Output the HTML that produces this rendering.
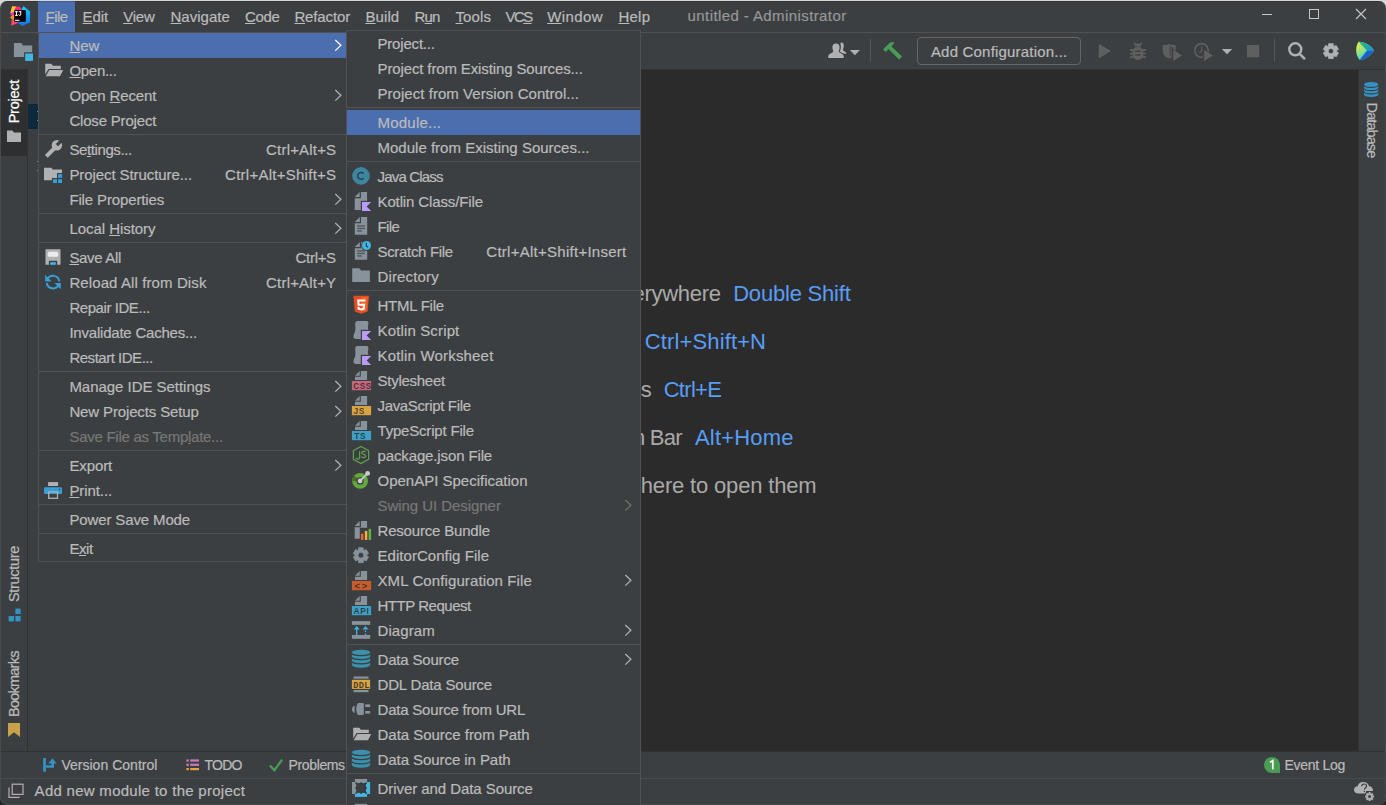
<!DOCTYPE html>
<html><head><meta charset="utf-8"><title>untitled - Administrator</title>
<style>
*{box-sizing:border-box}
html,body{margin:0;padding:0}
body{width:1386px;height:805px;overflow:hidden;position:relative;font-family:"Liberation Sans",sans-serif;background:linear-gradient(#d6d6d6 0,#d6d6d6 14px,#232323 14px)}
#frame{position:absolute;left:0;top:1px;width:1386px;height:804px;border:1px solid #4a4a4a;border-top-width:0;border-radius:7px;overflow:hidden;background:#3c3f41}
#win{position:absolute;left:-1px;top:-1px;width:1386px;height:805px}
#pop{position:absolute;left:0;top:0;width:1386px;height:805px;overflow:hidden}
.abs{position:absolute}
.t{position:absolute;white-space:pre;display:block;-webkit-text-stroke:0.2px}
.t u{text-decoration:underline;text-decoration-skip-ink:none;text-underline-offset:1px;text-decoration-thickness:1px}
svg.ov{position:absolute;left:0;top:0;width:1386px;height:805px;pointer-events:none}
.menu{position:absolute;background:#3c3f41;border:1px solid #515151}
.sel{position:absolute;height:25px;background:#4b6eaf}
.sep{position:absolute;left:0;right:0;height:1px;background:#515151}
</style></head><body>
<div id='frame'><div id='win'>

<!-- menubar -->
<div class='abs' style='left:38px;top:1px;width:37px;height:31px;background:#4b6eaf'></div>
<div class='abs' style='left:1px;top:32px;width:1384px;height:1px;background:#515151'></div>
<div class='abs' style='left:1px;top:1px;width:1384px;height:1px;background:rgba(0,0,0,0.16)'></div>
<!-- toolbar bottom border / editor -->
<div class='abs' style='left:28px;top:69px;width:1331px;height:682px;background:#2b2b2b'></div>
<div class='abs' style='left:1px;top:69px;width:1384px;height:1px;background:#323232'></div>
<!-- left strip -->
<div class='abs' style='left:1px;top:70px;width:26px;height:86px;background:#2d2f30'></div>
<div class='abs' style='left:27px;top:69px;width:1px;height:682px;background:#323232'></div>
<div class='abs' style='left:28px;top:69px;width:330px;height:682px;background:#3c3f41'></div>
<div class='abs' style='left:28px;top:104px;width:12px;height:25px;background:#0d293e'></div>
<!-- right strip -->
<div class='abs' style='left:1358px;top:69px;width:1px;height:682px;background:#323232'></div>
<!-- bottom strips -->
<div class='abs' style='left:1px;top:751px;width:1384px;height:1px;background:#323232'></div>
<div class='abs' style='left:1px;top:778px;width:1384px;height:1px;background:#4a4a4a'></div>
<!-- add configuration button -->
<div class='abs' style='left:917px;top:37px;width:164px;height:28px;border:1px solid #646668;border-radius:4px'></div>
<!-- toolbar separators -->
<div class='abs' style='left:870px;top:39px;width:1px;height:23px;background:#535557'></div>
<div class='abs' style='left:1274px;top:39px;width:1px;height:23px;background:#535557'></div>

<svg class='ov' viewBox='0 0 1386 805'><defs><linearGradient id="ijr" x1="0" y1="0" x2="0" y2="1"><stop offset="0" stop-color="#00d8ff"/><stop offset="1" stop-color="#1a6fe8"/></linearGradient><linearGradient id="ijl" x1="0" y1="0" x2="0" y2="1"><stop offset="0" stop-color="#ffd23c"/><stop offset="0.45" stop-color="#ff3ea8"/><stop offset="1" stop-color="#ff7a18"/></linearGradient><linearGradient id="lg1" x1="0" y1="0" x2="0.6" y2="1"><stop offset="0" stop-color="#f2f03a"/><stop offset="0.55" stop-color="#8fe08a"/><stop offset="1" stop-color="#1cc6e8"/></linearGradient><linearGradient id="lg2" x1="0" y1="0" x2="1" y2="1"><stop offset="0" stop-color="#19c46e"/><stop offset="1" stop-color="#1d8fe0"/></linearGradient></defs>
<defs><linearGradient id="ijll" x1="0" y1="0" x2="1" y2="1"><stop offset="0" stop-color="#ff6a2c"/><stop offset="1" stop-color="#ff2aa8"/></linearGradient></defs>
<path d="M12.1 6.2 L16.4 6.4 L15.2 10.6 L14.2 12.2 L10.2 13.5 Z" fill="#ffc83a"/>
<path d="M16.1 6.6 L19.9 6.8 L21.9 9.6 L21.9 10.4 L14.2 10.4 L15 8.4 Z" fill="#ff2d78"/>
<path d="M10.2 13.5 L14.4 11.4 L14.4 15.2 L11 15.6 Z" fill="#f02bd0"/>
<path d="M10.2 17.3 L12.4 15.3 L14.4 15 L14.4 19.2 L12 19.6 Z" fill="#ff9a10"/>
<path d="M12 19.2 L14.4 18.6 L14.4 21.5 L18.4 21.5 L18 23 L11.2 25.7 Z" fill="url(#ijll)"/>
<path d="M23.4 6 L30 11.4 L30 22.5 L22 26 L18.2 22.9 L18.4 21.5 L25.6 21.5 L25.6 10.4 L21.9 10.4 L21.8 9.5 Z" fill="url(#ijr)"/>
<rect x="14.2" y="10.2" width="11.6" height="11.5" fill="#0b0305"/>
<g fill="#ffffff"><rect x="15.1" y="11.2" width="2.7" height="1"/><rect x="15.95" y="11.2" width="1" height="4.6"/><rect x="15.1" y="14.9" width="2.7" height="1"/><rect x="18.7" y="11.2" width="2.5" height="1"/><rect x="20.2" y="11.2" width="1" height="3.6"/></g>
<path d="M18.7 14.3 V14.6 C18.7 15.1 19.2 15.4 19.8 15.4 C20.4 15.4 20.7 15.100 20.7 14.6" fill="none" stroke="#fff" stroke-width="1"/>
<rect x="15" y="19.8" width="4.4" height="1.1" fill="#f4eeee"/>
<path d="M13.9 43 H21.3 L23 45.5 H32.2 V52.3 H24.1 V57 H13.9 Z" fill="#87929a"/>
<rect x="25.2" y="53.5" width="7.8" height="7.4" fill="#40b6e0"/>
<path d="M7 130.4 H12.4 L14 132.6 H21 V142 H7 Z" fill="#afb1b3"/>
<g fill="#3592c4"><rect x="15.4" y="608.6" width="5.2" height="5.4"/><rect x="8.6" y="616" width="5.4" height="5.4"/><rect x="15.4" y="616" width="5.2" height="5.4"/></g>
<path d="M8 723 H20 V737 L14 732.2 L8 737 Z" fill="#c9a14a"/>
<g fill="#afb1b3"><path d="M841.2 42.6 C843.4 42.6 844 44.6 843.8 46.6 C843.6 48.4 842.8 49.4 843 50 C843.4 51 845.4 51.4 846.2 52.8 L846.2 54 L842.6 53.2 L839.6 51.4 C840.6 50 841 48 840.8 46 C840.6 44.4 840 43.2 841.2 42.6 Z"/><path d="M836 43.6 C838.6 43.6 839.8 45.6 839.6 48 C839.4 50 838.6 51 838.8 51.8 C839.2 53 843.4 53.6 843.8 56.4 L843.8 58 H828.2 L828.2 56.4 C828.6 53.6 832.8 53 833.2 51.8 C833.4 51 832.6 50 832.4 48 C832.2 45.6 833.4 43.6 836 43.6 Z"/></g>
<path d="M849.9 50 H859.9 L854.9 55.2 Z" fill="#afb1b3"/>
<path d="M883 49.4 L890 42.4 L894 42 L893.6 44 L891.4 46.2 L902 56.6 L899 59.6 L888.6 49 L885.8 52 Z" fill="#499c54"/>
<path d="M1098.8 43.8 L1111 51.1 L1098.8 58.4 Z" fill="#5e6060"/>
<g fill="#5e6060"><path d="M1137.9 46.8 C1141.6 46.8 1143.4 49.6 1143.4 53.4 C1143.4 57.2 1141.2 59.8 1137.9 59.8 C1134.6 59.8 1132.4 57.2 1132.4 53.4 C1132.400 49.6 1134.2 46.8 1137.9 46.8 Z"/><path d="M1134.6 46.6 C1134.6 44.6 1136 43.6 1137.9 43.6 C1139.8 43.6 1141.2 44.600 1141.2 46.6 Z"/></g>
<g stroke="#5e6060" stroke-width="1.8" fill="none"><path d="M1135.8 44.6 L1134 42.8 M1140 44.6 L1141.8 42.800"/><path d="M1130 50 H1133 M1130 53.600 H1133 M1130 57.2 H1133 M1142.8 50 H1145.8 M1142.8 53.600 H1145.800 M1142.8 57.2 H1145.800"/></g>
<rect x="1135.2" y="50.6" width="5.4" height="1.4" fill="#3c3f41"/><rect x="1135.2" y="54.2" width="5.4" height="1.400" fill="#3c3f41"/>
<path d="M1162.800 45 C1166 45 1168 44.6 1169.2 44 C1170.600 44.6 1172.400 45 1175.600 45 V51 C1175.600 55 1172.800 57.4 1169.2 58.600 C1165.600 57.400 1162.800 55 1162.800 51 Z" fill="#5e6060"/>
<path d="M1169.4 46.2 V57 C1171.4 56 1173.200 54.4 1173.800 52 V46.8 C1172 46.800 1170.600 46.6 1169.400 46.2 Z" fill="#3c3f41" opacity="0.55"/>
<path d="M1172 48.4 L1183.400 55.300 L1172 62.2 Z" fill="#3c3f41"/>
<path d="M1173.200 49.800 L1182 55.400 L1173.200 61 Z" fill="#5e6060"/>
<circle cx="1201.500" cy="50.400" r="6.800" fill="none" stroke="#5e6060" stroke-width="1.600"/>
<path d="M1201.700 46.400 V50.600 L1199.600 52.600" fill="none" stroke="#5e6060" stroke-width="1.300"/>
<path d="M1203 48.400 L1214.400 55.300 L1203 62.200 Z" fill="#3c3f41"/>
<path d="M1204.200 49.800 L1213 55.400 L1204.200 61 Z" fill="#5e6060"/>
<path d="M1221.800 49 H1232.200 L1227 54.200 Z" fill="#afb1b3"/>
<rect x="1247" y="45" width="12.200" height="12.200" fill="#5e6060"/>
<circle cx="1295.300" cy="49.300" r="6" fill="none" stroke="#afb1b3" stroke-width="2.400"/>
<path d="M1299.600 53.800 L1305 59.200" stroke="#afb1b3" stroke-width="2.600"/>
<path d="M1328.39 46.09 L1328.59 43.65 L1333.21 43.65 L1333.41 46.09 L1333.98 46.42 L1336.20 45.38 L1338.51 49.37 L1336.49 50.77 L1336.49 51.43 L1338.51 52.83 L1336.20 56.82 L1333.98 55.78 L1333.41 56.11 L1333.21 58.55 L1328.59 58.55 L1328.39 56.11 L1327.82 55.78 L1325.60 56.82 L1323.29 52.83 L1325.31 51.43 L1325.31 50.77 L1323.29 49.37 L1325.60 45.38 L1327.82 46.42 Z M1333.6000000000001 51.1 A2.7 2.7 0 1 0 1328.2 51.1 A2.7 2.7 0 1 0 1333.6000000000001 51.1 Z" fill="#afb1b3" fill-rule="evenodd" stroke="#afb1b3" stroke-width="0.800" stroke-linejoin="round"/>
<path d="M1358.600 41.800 C1364 41.600 1371 45.600 1374 50.400 C1371.500 55.400 1364.500 59.800 1359.600 60 C1355.400 55.400 1355 46.400 1358.600 41.800 Z" fill="url(#lg1)"/>
<path d="M1358.600 41.800 C1364 41.600 1371 45.600 1374 50.400 L1367 50.400 Z" fill="url(#lg2)"/>
<path d="M1374 50.400 C1371.500 55.400 1364.500 59.800 1359.600 60 L1367 50.400 Z" fill="#1a62c8"/>
<g stroke="#c8c8c8" stroke-width="1" fill="none" shape-rendering="crispEdges"><path d="M1262 14.500 H1272"/><rect x="1309.500" y="9.500" width="9" height="9"/></g>
<g stroke="#c8c8c8" stroke-width="1.100" fill="none"><path d="M1356 9 L1366 19 M1366 9 L1356 19"/></g>
<path d="M1364 84.5 A7.15 2.4 0 0 1 1378.3 84.5 V94.6 A7.15 2.4 0 0 1 1364 94.6 Z" fill="#3592c4"/>
<path d="M1364 85.0 A7.15 2.4 0 0 0 1378.3 85.0" fill="none" stroke="#3c3f41" stroke-width="1.100"/>
<path d="M1364 88.23333333333333 A7.15 2.4 0 0 0 1378.3 88.23333333333333" fill="none" stroke="#3c3f41" stroke-width="1.100"/>
<path d="M1364 91.46666666666667 A7.15 2.4 0 0 0 1378.3 91.46666666666667" fill="none" stroke="#3c3f41" stroke-width="1.100"/>
<g fill="#3592c4"><rect x="43.100" y="758" width="2.800" height="13.700"/><path d="M45.900 765.300 H51.400 V763 H54 V767.800 H45.900 Z"/><path d="M48.200 763.600 L52.500 758.200 L56.600 763.600 Z"/></g>
<g><rect x="186.400" y="759.400" width="2.400" height="2.200" fill="#c77dbb"/><rect x="190.200" y="759.400" width="8.800" height="2.200" fill="#c77dbb"/><rect x="186.400" y="763.700" width="2.400" height="2.200" fill="#c77dbb"/><rect x="190.200" y="763.700" width="8.800" height="2.200" fill="#c77dbb"/><rect x="186.400" y="768" width="2.400" height="2.200" fill="#e8a33e"/><rect x="190.200" y="768" width="8.800" height="2.200" fill="#e8a33e"/></g>
<path d="M269.800 765.400 L274.400 770.200 L282.200 759.600" fill="none" stroke="#499c54" stroke-width="2.200"/>
<path d="M1272 757 A8 8 0 0 1 1280 765 V773 H1272 A8 8 0 0 1 1272 757 Z" fill="#499c54"/>
<path d="M1270 762.400 L1272.800 760.600 V769.400" fill="none" stroke="#fff" stroke-width="1.700"/>
<g fill="none" stroke="#afb1b3" stroke-width="1.200"><rect x="12.200" y="784.200" width="10.800" height="10.200"/><path d="M9 787.400 V797.400 H19.600"/></g>
<path d="M1358.400 793.600 C1355.600 793.600 1354 791.800 1354 789.800 C1354 787.800 1355.600 786.200 1357.600 786.200 C1358.200 783.600 1360.600 782 1363.200 782 C1366 782 1368.200 783.600 1369 786 C1371.400 786.400 1373 788.200 1373 790.200 V791 H1366 V793.600 Z" fill="#afb1b3"/>
<path d="M1361.600 786.200 C1361.800 784.600 1363 784 1364.200 784 C1365.600 784 1366.600 784.800 1366.600 786 C1366.600 787.600 1364.400 787.800 1364.400 789.600 M1364.400 790.800 V792" fill="none" stroke="#3c3f41" stroke-width="1.200"/>
<circle cx="1369.6" cy="796.6" r="5.6" fill="#3c3f41"/>
<path d="M1368.56 793.57 L1368.60 792.11 L1370.60 792.11 L1370.64 793.57 L1371.01 793.73 L1372.06 792.72 L1373.48 794.14 L1372.47 795.19 L1372.63 795.56 L1374.09 795.60 L1374.09 797.60 L1372.63 797.64 L1372.47 798.01 L1373.48 799.06 L1372.06 800.48 L1371.01 799.47 L1370.64 799.63 L1370.60 801.09 L1368.60 801.09 L1368.56 799.63 L1368.19 799.47 L1367.14 800.48 L1365.72 799.06 L1366.73 798.01 L1366.57 797.64 L1365.11 797.60 L1365.11 795.60 L1366.57 795.56 L1366.73 795.19 L1365.72 794.14 L1367.14 792.72 L1368.19 793.73 Z M1371.1 796.6 A1.5 1.5 0 1 0 1368.1 796.6 A1.5 1.5 0 1 0 1371.1 796.6 Z" fill="#afb1b3" fill-rule="evenodd"/>
<g fill="#7f8b93"><rect x="37" y="111" width="1" height="1"/><rect x="37" y="120" width="1" height="1"/><rect x="37" y="161" width="1" height="1"/><rect x="37" y="170" width="1" height="1"/></g></svg>
<span class='t' style='left:45.5px;top:6.80px;font-size:15px;line-height:20px;letter-spacing:-0.491px;color:#bbbbbb;'><u>F</u>ile</span><span class='t' style='left:82.6px;top:6.80px;font-size:15px;line-height:20px;letter-spacing:-0.120px;color:#bbbbbb;'><u>E</u>dit</span><span class='t' style='left:123.2px;top:6.80px;font-size:15px;line-height:20px;letter-spacing:-0.217px;color:#bbbbbb;'><u>V</u>iew</span><span class='t' style='left:170.5px;top:6.80px;font-size:15px;line-height:20px;letter-spacing:0.014px;color:#bbbbbb;'><u>N</u>avigate</span><span class='t' style='left:245.0px;top:6.80px;font-size:15px;line-height:20px;letter-spacing:-0.353px;color:#bbbbbb;'><u>C</u>ode</span><span class='t' style='left:294.4px;top:6.80px;font-size:15px;line-height:20px;letter-spacing:-0.129px;color:#bbbbbb;'><u>R</u>efactor</span><span class='t' style='left:365.4px;top:6.80px;font-size:15px;line-height:20px;letter-spacing:0.110px;color:#bbbbbb;'><u>B</u>uild</span><span class='t' style='left:414.6px;top:6.80px;font-size:15px;line-height:20px;letter-spacing:-0.866px;color:#bbbbbb;'>R<u>u</u>n</span><span class='t' style='left:455.5px;top:6.80px;font-size:15px;line-height:20px;letter-spacing:0.092px;color:#bbbbbb;'><u>T</u>ools</span><span class='t' style='left:505.6px;top:6.80px;font-size:15px;line-height:20px;letter-spacing:-1.622px;color:#bbbbbb;'>VC<u>S</u></span><span class='t' style='left:547.2px;top:6.80px;font-size:15px;line-height:20px;letter-spacing:0.428px;color:#bbbbbb;'><u>W</u>indow</span><span class='t' style='left:618.4px;top:6.80px;font-size:15px;line-height:20px;letter-spacing:0.247px;color:#bbbbbb;'><u>H</u>elp</span><span class='t' style='left:687.6px;top:5.80px;font-size:15px;line-height:20px;letter-spacing:0.407px;color:#979797;'>untitled - Administrator</span><span class='t' style='left:930.9px;top:41.80px;font-size:15px;line-height:20px;letter-spacing:0.195px;color:#bbbbbb;'>Add Configuration...</span><span class='t' style='left:61.4px;top:755.15px;font-size:14px;line-height:20px;letter-spacing:0.020px;color:#bbbbbb;'>Version Control</span><span class='t' style='left:204.5px;top:755.15px;font-size:14px;line-height:20px;letter-spacing:-0.734px;color:#bbbbbb;'>TODO</span><span class='t' style='left:288.6px;top:755.15px;font-size:14px;line-height:20px;letter-spacing:-0.377px;color:#bbbbbb;'>Problems</span><span class='t' style='left:1284.5px;top:755.15px;font-size:14px;line-height:20px;letter-spacing:-0.295px;color:#bbbbbb;'>Event Log</span><span class='t' style='left:34.6px;top:780.80px;font-size:15px;line-height:20px;letter-spacing:0.278px;color:#bbbbbb;'>Add new module to the project</span><span class='t' style='left:533.4px;top:279.38px;font-size:22px;line-height:30px;letter-spacing:-0.274px;color:#a9a9a9;-webkit-text-stroke:0;'>Search Everywhere</span><span class='t' style='left:733.2px;top:279.38px;font-size:22px;line-height:30px;letter-spacing:-0.205px;color:#589df6;-webkit-text-stroke:0;'>Double Shift</span><span class='t' style='left:539.5px;top:327.38px;font-size:22px;line-height:30px;letter-spacing:-0.319px;color:#a9a9a9;-webkit-text-stroke:0;'>Go to File</span><span class='t' style='left:644.8px;top:327.38px;font-size:22px;line-height:30px;letter-spacing:0.125px;color:#589df6;-webkit-text-stroke:0;'>Ctrl+Shift+N</span><span class='t' style='left:534.8px;top:375.38px;font-size:22px;line-height:30px;letter-spacing:-0.480px;color:#a9a9a9;-webkit-text-stroke:0;'>Recent Files</span><span class='t' style='left:663.7px;top:375.38px;font-size:22px;line-height:30px;letter-spacing:-0.710px;color:#589df6;-webkit-text-stroke:0;'>Ctrl+E</span><span class='t' style='left:548.5px;top:423.38px;font-size:22px;line-height:30px;letter-spacing:-0.793px;color:#a9a9a9;-webkit-text-stroke:0;'>Navigation Bar</span><span class='t' style='left:695.0px;top:423.38px;font-size:22px;line-height:30px;letter-spacing:0.183px;color:#589df6;-webkit-text-stroke:0;'>Alt+Home</span><span class='t' style='left:543.7px;top:471.38px;font-size:22px;line-height:30px;letter-spacing:-0.174px;color:#a9a9a9;-webkit-text-stroke:0;'>Drop files here to open them</span>
<span class='t' style='left:0;top:0;font-size:14.5px;line-height:14px;color:#ffffff;transform-origin:0 0;transform:translate(6.98px,123.30px) rotate(-90deg);letter-spacing:-0.273px'>Project</span><span class='t' style='left:0;top:0;font-size:14.5px;line-height:14px;color:#bbbbbb;transform-origin:0 0;transform:translate(6.98px,602.00px) rotate(-90deg);letter-spacing:-0.318px'>Structure</span><span class='t' style='left:0;top:0;font-size:14.5px;line-height:14px;color:#bbbbbb;transform-origin:0 0;transform:translate(6.98px,717.00px) rotate(-90deg);letter-spacing:-0.766px'>Bookmarks</span><span class='t' style='left:0;top:0;font-size:14.5px;line-height:14px;color:#bbbbbb;transform-origin:0 0;transform:translate(1378.62px,102.60px) rotate(90deg);letter-spacing:-0.925px'>Database</span>
</div></div>
<div id='pop'>
<!-- File menu -->
<div class='menu' style='left:38px;top:32px;width:309px;height:530px'><div class='sel' style='left:0;top:0px;width:307px'></div><div class='sep' style='top:101px'></div><div class='sep' style='top:180px'></div><div class='sep' style='top:209px'></div><div class='sep' style='top:338px'></div><div class='sep' style='top:417px'></div><div class='sep' style='top:471px'></div><div class='sep' style='top:500px'></div></div>
<svg class='ov' viewBox='0 0 1386 805'><path d='M335.3 40.0 L340.90000000000003 45.3 L335.3 50.599999999999994' fill='none' stroke='#ffffff' stroke-width='1.3'/><path d='M335.3 90.0 L340.90000000000003 95.3 L335.3 100.6' fill='none' stroke='#afb1b3' stroke-width='1.3'/><path d='M335.3 194.0 L340.90000000000003 199.3 L335.3 204.60000000000002' fill='none' stroke='#afb1b3' stroke-width='1.3'/><path d='M335.3 223.0 L340.90000000000003 228.3 L335.3 233.60000000000002' fill='none' stroke='#afb1b3' stroke-width='1.3'/><path d='M335.3 381.0 L340.90000000000003 386.3 L335.3 391.6' fill='none' stroke='#afb1b3' stroke-width='1.3'/><path d='M335.3 406.0 L340.90000000000003 411.3 L335.3 416.6' fill='none' stroke='#afb1b3' stroke-width='1.3'/><path d='M335.3 460.0 L340.90000000000003 465.3 L335.3 470.6' fill='none' stroke='#afb1b3' stroke-width='1.3'/><!-- Open folder -->
<g fill="#afb1b3">
<path d="M45.2 63.8 H51.3 L52.8 65.8 H60.8 V68.9 H48.6 L45.2 74.6 Z"/>
<path d="M49.3 70 H63.2 L60 76.3 H45.7 Z"/>
</g>
<!-- wrench -->
<path d="M46.3 156.4 L54.8 147.8" stroke="#afb1b3" stroke-width="4" fill="none"/>
<circle cx="56.9" cy="145.2" r="5.2" fill="#afb1b3"/>
<rect x="-1.6" y="-8" width="3.2" height="8.3" transform="translate(57.1 145) rotate(45)" fill="#3c3f41"/>
<!-- project structure -->
<path fill="#afb1b3" d="M44 167.7 H51.4 L52.8 169.6 H62 V172.9 H57 V178 H51.9 V180.3 H44 Z"/>
<g fill="#389fd6"><rect x="58.1" y="174.1" width="4" height="3.8"/><rect x="53" y="179.2" width="4" height="3.8"/><rect x="58.1" y="179.2" width="4" height="3.8"/></g>
<!-- save all -->
<path fill="#afb1b3" d="M45.5 249.3 H60.5 V264.8 H57.2 V260.8 H48.9 V264.8 H45.5 Z"/>
<rect x="47.8" y="251.8" width="10.4" height="5" rx="1.6" fill="#ececec"/>
<rect x="50.2" y="262.2" width="5.6" height="2.6" fill="#40b6e0"/>
<!-- reload -->
<g fill="none" stroke="#389fd6" stroke-width="2">
<path d="M47.2 279.8 A6.3 6.3 0 0 1 59.3 281.3"/>
<path d="M58.9 284.4 A6.3 6.3 0 0 1 46.8 283"/>
</g>
<path fill="#389fd6" d="M45.2 275 V281.4 H51.6 Z"/>
<path fill="#389fd6" d="M60.9 289.3 V282.9 H54.5 Z"/>
<!-- print -->
<rect x="48.1" y="482.1" width="10" height="3.9" fill="#afb1b3"/>
<rect x="44" y="487.2" width="18" height="6.7" rx="1.2" fill="#389fd6"/>
<rect x="58.8" y="488.9" width="1.4" height="1.2" fill="#3c3f41"/>
<rect x="48.7" y="494" width="8.8" height="4.3" fill="#3c3f41"/>
<rect x="48.7" y="491.9" width="8.8" height="6.4" fill="none" stroke="#afb1b3" stroke-width="1.3"/>
</svg>
<span class='t' style='left:69.4px;top:35.80px;font-size:15px;line-height:20px;letter-spacing:-0.008px;color:#bbbbbb;'><u>N</u>ew</span><span class='t' style='left:69.4px;top:60.80px;font-size:15px;line-height:20px;letter-spacing:-0.284px;color:#bbbbbb;'><u>O</u>pen...</span><span class='t' style='left:69.4px;top:85.80px;font-size:15px;line-height:20px;letter-spacing:-0.139px;color:#bbbbbb;'>Open <u>R</u>ecent</span><span class='t' style='left:69.4px;top:110.80px;font-size:15px;line-height:20px;letter-spacing:-0.184px;color:#bbbbbb;'>Close Pro<u>j</u>ect</span><span class='t' style='left:69.4px;top:139.80px;font-size:15px;line-height:20px;letter-spacing:-0.390px;color:#bbbbbb;'>Se<u>t</u>tings...</span><span class='t' style='left:266.1px;top:139.80px;font-size:15px;line-height:20px;letter-spacing:0.182px;color:#bbbbbb;'>Ctrl+Alt+S</span><span class='t' style='left:69.4px;top:164.80px;font-size:15px;line-height:20px;letter-spacing:-0.080px;color:#bbbbbb;'>Project Structure...</span><span class='t' style='left:225.1px;top:164.80px;font-size:15px;line-height:20px;letter-spacing:0.257px;color:#bbbbbb;'>Ctrl+Alt+Shift+S</span><span class='t' style='left:69.4px;top:189.80px;font-size:15px;line-height:20px;letter-spacing:-0.136px;color:#bbbbbb;'>File Properties</span><span class='t' style='left:69.4px;top:218.80px;font-size:15px;line-height:20px;letter-spacing:-0.050px;color:#bbbbbb;'>Local <u>H</u>istory</span><span class='t' style='left:69.4px;top:247.80px;font-size:15px;line-height:20px;letter-spacing:-0.329px;color:#bbbbbb;'><u>S</u>ave All</span><span class='t' style='left:295.6px;top:247.80px;font-size:15px;line-height:20px;letter-spacing:-0.319px;color:#bbbbbb;'>Ctrl+S</span><span class='t' style='left:69.4px;top:272.80px;font-size:15px;line-height:20px;letter-spacing:0.103px;color:#bbbbbb;'>Reload All from Disk</span><span class='t' style='left:266.1px;top:272.80px;font-size:15px;line-height:20px;letter-spacing:0.182px;color:#bbbbbb;'>Ctrl+Alt+Y</span><span class='t' style='left:69.4px;top:297.80px;font-size:15px;line-height:20px;letter-spacing:-0.431px;color:#bbbbbb;'>Repair IDE...</span><span class='t' style='left:69.4px;top:322.80px;font-size:15px;line-height:20px;letter-spacing:-0.213px;color:#bbbbbb;'>Invalidate Caches...</span><span class='t' style='left:69.4px;top:347.80px;font-size:15px;line-height:20px;letter-spacing:-0.479px;color:#bbbbbb;'>Restart IDE...</span><span class='t' style='left:69.4px;top:376.80px;font-size:15px;line-height:20px;letter-spacing:-0.036px;color:#bbbbbb;'>Manage IDE Settings</span><span class='t' style='left:69.4px;top:401.80px;font-size:15px;line-height:20px;letter-spacing:-0.137px;color:#bbbbbb;'>New Projects Setup</span><span class='t' style='left:69.4px;top:426.80px;font-size:15px;line-height:20px;letter-spacing:-0.266px;color:#777777;'>Save File as Temp<u>l</u>ate...</span><span class='t' style='left:69.4px;top:455.80px;font-size:15px;line-height:20px;letter-spacing:-0.112px;color:#bbbbbb;'>Export</span><span class='t' style='left:69.4px;top:480.80px;font-size:15px;line-height:20px;letter-spacing:-0.080px;color:#bbbbbb;'><u>P</u>rint...</span><span class='t' style='left:69.4px;top:509.80px;font-size:15px;line-height:20px;letter-spacing:-0.127px;color:#bbbbbb;'>Power Save Mode</span><span class='t' style='left:69.4px;top:538.80px;font-size:15px;line-height:20px;letter-spacing:-0.405px;color:#bbbbbb;'>E<u>x</u>it</span>
<!-- New submenu -->
<div class='menu' style='left:346px;top:30px;width:295px;height:790px'><div class='sel' style='left:0;top:79px;width:293px'></div><div class='sep' style='top:76px'></div><div class='sep' style='top:130px'></div><div class='sep' style='top:259px'></div><div class='sep' style='top:613px'></div><div class='sep' style='top:742px'></div></div>
<svg class='ov' viewBox='0 0 1386 805'><path d='M625.3 500.0 L630.9 505.3 L625.3 510.6' fill='none' stroke='#6e6e6e' stroke-width='1.3'/><path d='M625.3 575.0 L630.9 580.3 L625.3 585.5999999999999' fill='none' stroke='#afb1b3' stroke-width='1.3'/><path d='M625.3 625.0 L630.9 630.3 L625.3 635.5999999999999' fill='none' stroke='#afb1b3' stroke-width='1.3'/><path d='M625.3 654.0 L630.9 659.3 L625.3 664.5999999999999' fill='none' stroke='#afb1b3' stroke-width='1.3'/><circle cx="361" cy="175.9" r="8.8" fill="#3e86a0"/>
<path d="M363.6 173.6 A3.4 3.4 0 1 0 363.6 178.2" fill="none" stroke="#263f49" stroke-width="1.4"/>
<path d="M360.9 192 H367.09999999999997 V210 H354.7 V198.2 H360.9 Z" fill="#87929a"/>
<path d="M354.7 197 L359.7 192 V197 Z" fill="#87929a"/>
<path d="M360.8 200.8 H372.6 V212.4 H360.8 Z" fill="#3c3f41"/>
<path d="M362 202 H371.2 L366.6 206.5 L371.2 211 H362 Z" fill="#b99bf8"/>
<path d="M361.0 217 H367.2 V234.8 H354.8 V223.2 H361.0 Z" fill="#87929a"/>
<path d="M354.8 222 L359.8 217 V222 Z" fill="#87929a"/>
<rect x="357.1" y="225.3" width="7.8" height="1.3" fill="#3c3f41" opacity="0.75"/>
<rect x="357.1" y="227.8" width="7.8" height="1.3" fill="#3c3f41" opacity="0.75"/>
<rect x="357.1" y="230.3" width="4.8" height="1.3" fill="#3c3f41" opacity="0.75"/>
<path d="M361.0 242 H367.2 V259.8 H354.8 V248.2 H361.0 Z" fill="#87929a"/>
<path d="M354.8 247 L359.8 242 V247 Z" fill="#87929a"/>
<rect x="357.1" y="250.3" width="7.8" height="1.3" fill="#3c3f41" opacity="0.75"/>
<rect x="357.1" y="252.8" width="7.8" height="1.3" fill="#3c3f41" opacity="0.75"/>
<rect x="357.1" y="255.3" width="4.8" height="1.3" fill="#3c3f41" opacity="0.75"/>
<circle cx="366.5" cy="245.5" r="5.4" fill="#3c3f41"/>
<circle cx="366.5" cy="245.5" r="4.5" fill="#40b6e0"/>
<path d="M366.3 242.8 V245.9 L368 247.4" fill="none" stroke="#1d3a47" stroke-width="1.1"/>
<path d="M352.2 268.2 H359.3 L361 270.5 H369.9 V282 H352.2 Z" fill="#87929a"/>
<path d="M353.4 295.8 H369 L367.6 311.6 L361.2 313.7 L354.8 311.6 Z" fill="#e44d26"/>
<path d="M361.2 297.1 V312.3 L366.4 310.6 L367.6 297.1 Z" fill="#f16529"/>
<path d="M357.2 299.6 H365.4 V301.6 H359.3 L359.5 303.8 H365.2 L364.7 309.4 L361.2 310.5 L357.7 309.4 L357.5 306.8 H359.5 L359.6 307.9 L361.2 308.4 L362.8 307.9 L363 305.8 H357.6 Z" fill="#ffffff"/>
<path d="M357 321 H366.5 C368.3 321 368.7 322.6 368.3 324.2 C367.8 326.2 367.8 327.6 368.3 329.4 V331 H362 V339 H356 C353.6 339 353 337 353.8 334.8 C354.6 332.8 355.6 331 355.4 327 C355.2 324.4 354.6 322 357 321 Z" fill="#87929a"/>
<path d="M360.8 329.8 H372.6 V341.4 H360.8 Z" fill="#3c3f41"/>
<path d="M362 331 H371.2 L366.6 335.5 L371.2 340 H362 Z" fill="#b99bf8"/>
<path d="M357 346 H366.5 C368.3 346 368.7 347.6 368.3 349.2 C367.8 351.2 367.8 352.6 368.3 354.4 V356 H362 V364 H356 C353.6 364 353 362 353.8 359.8 C354.6 357.8 355.6 356 355.4 352 C355.2 349.4 354.6 347 357 346 Z" fill="#87929a"/>
<path d="M360.8 354.8 H372.6 V366.4 H360.8 Z" fill="#3c3f41"/>
<path d="M362 356 H371.2 L366.6 360.5 L371.2 365 H362 Z" fill="#b99bf8"/>
<path d="M360.8 371 H367.1 V380 H355 V376.8 H360.8 Z" fill="#87929a"/>
<path d="M355 375.7 L359.7 371 V375.7 Z" fill="#87929a"/>
<rect x="351.9" y="381" width="19.2" height="9.2" fill="#c4677d"/>
<text x="353.3" y="388.9" font-family="Liberation Sans, sans-serif" font-weight="bold" font-size="8.2" letter-spacing="0.5" fill="#231f20" fill-opacity="0.75">CSS</text>
<path d="M360.8 396 H367.1 V405 H355 V401.8 H360.8 Z" fill="#87929a"/>
<path d="M355 400.7 L359.7 396 V400.7 Z" fill="#87929a"/>
<rect x="351.9" y="406" width="19.2" height="9.2" fill="#d9a343"/>
<text x="353.6" y="413.9" font-family="Liberation Sans, sans-serif" font-weight="bold" font-size="8.4" letter-spacing="0.6" fill="#231f20" fill-opacity="0.75">JS</text>
<path d="M360.8 421 H367.1 V430 H355 V426.8 H360.8 Z" fill="#87929a"/>
<path d="M355 425.7 L359.7 421 V425.7 Z" fill="#87929a"/>
<rect x="351.9" y="431" width="19.2" height="9.2" fill="#3ea0c4"/>
<text x="354.2" y="438.9" font-family="Liberation Sans, sans-serif" font-weight="bold" font-size="8.4" letter-spacing="0.6" fill="#231f20" fill-opacity="0.75">TS</text>
<path d="M360.8 571 H367.1 V580 H355 V576.8 H360.8 Z" fill="#87929a"/>
<path d="M355 575.7 L359.7 571 V575.7 Z" fill="#87929a"/>
<rect x="351.9" y="581" width="19.2" height="9.2" fill="#c75c2a"/>
<text x="354.6" y="588.9" font-family="Liberation Sans, sans-serif" font-weight="bold" font-size="9.4" letter-spacing="1.6" fill="#231f20" fill-opacity="0.75">&lt;&gt;</text>
<path d="M360.8 596 H367.1 V605 H355 V601.8 H360.8 Z" fill="#87929a"/>
<path d="M355 600.7 L359.7 596 V600.7 Z" fill="#87929a"/>
<rect x="351.9" y="606" width="19.2" height="9.2" fill="#3ea0c4"/>
<text x="353.4" y="613.9" font-family="Liberation Sans, sans-serif" font-weight="bold" font-size="8.4" letter-spacing="0.8" fill="#231f20" fill-opacity="0.75">API</text>
<path d="M361 446.4 L368.6 450.7 V459.3 L361 463.6 L353.4 459.3 V450.7 Z" fill="none" stroke="#5fa04e" stroke-width="1.2"/>
<path d="M359.6 451.2 V457.4 C359.6 459 358.6 459.4 357.4 459 L355.8 458" fill="none" stroke="#5fa04e" stroke-width="1.2"/>
<path d="M365.6 452 C364.4 451 361.6 451 361.6 452.8 C361.6 454.9 365.8 453.9 365.8 456.1 C365.8 457.9 362.6 457.9 361.3 456.8" fill="none" stroke="#5fa04e" stroke-width="1.2"/>
<circle cx="360.1" cy="480.9" r="7.9" fill="#62a83c"/>
<path d="M360.1 480.9 L352.3 481.2 A7.9 7.9 0 0 1 354.3 475.6 Z" fill="#4d6b26"/>
<circle cx="360.1" cy="480.9" r="3.6" fill="#3c3f41"/>
<path d="M360.1 480.9 L367.6 473.4" stroke="#c9ccd0" stroke-width="1.5"/>
<circle cx="360.1" cy="480.9" r="2.4" fill="#c9ccd0"/>
<circle cx="367.6" cy="473.4" r="2.4" fill="#c9ccd0"/>
<path d="M360.9 521 H367.09999999999997 V538.8 H354.7 V527.2 H360.9 Z" fill="#87929a"/>
<path d="M354.7 526 L359.7 521 V526 Z" fill="#87929a"/>
<rect x="359.8" y="527.8" width="12.4" height="12.6" fill="#3c3f41"/>
<rect x="360.9" y="533.7" width="2.5" height="6.2" fill="#f26522"/>
<rect x="364.8" y="530.9" width="2.5" height="9" fill="#f4af3d"/>
<rect x="368.6" y="528.9" width="2.5" height="11" fill="#62b543"/>
<path d="M358.10 550.35 L358.39 550.19 L358.59 547.75 L363.21 547.75 L363.41 550.19 L363.70 550.35 L363.98 550.52 L366.20 549.48 L368.51 553.47 L366.49 554.87 L366.50 555.20 L366.49 555.53 L368.51 556.93 L366.20 560.92 L363.98 559.88 L363.70 560.05 L363.41 560.21 L363.21 562.65 L358.59 562.65 L358.39 560.21 L358.10 560.05 L357.82 559.88 L355.60 560.92 L353.29 556.93 L355.31 555.53 L355.30 555.20 L355.31 554.87 L353.29 553.47 L355.60 549.48 L357.82 550.52 Z M363.79999999999995 555.2 A2.9 2.9 0 1 0 358.0 555.2 A2.9 2.9 0 1 0 363.79999999999995 555.2 Z" fill="#87929a" fill-rule="evenodd" stroke="#87929a" stroke-width="0.8" stroke-linejoin="round"/>
<rect x="351.9" y="621.1" width="18.3" height="3.8" fill="#87929a"/>
<rect x="351.9" y="635" width="18.3" height="3.8" fill="#87929a"/>
<path d="M356.7 635 V628.5" stroke="#40b6e0" stroke-width="1.3"/>
<path d="M353.7 629.6 L356.7 626 L359.7 629.6 Z" fill="#40b6e0"/>
<path d="M365.5 635 V628.5" stroke="#40b6e0" stroke-width="1.3" stroke-dasharray="1.6 1.4"/>
<path d="M362.5 629.6 L365.5 626 L368.5 629.6 Z" fill="#40b6e0"/>
<path d="M351.9 652.4 A9.15 2.6 0 0 1 370.2 652.4 V665.0999999999999 A9.15 2.6 0 0 1 351.9 665.0999999999999 Z" fill="#3a92ae"/>
<path d="M351.9 653.0 A9.15 2.6 0 0 0 370.2 653.0" fill="none" stroke="#3c3f41" stroke-width="1.2"/>
<path d="M351.9 657.1 A9.15 2.6 0 0 0 370.2 657.1" fill="none" stroke="#3c3f41" stroke-width="1.2"/>
<path d="M351.9 661.2 A9.15 2.6 0 0 0 370.2 661.2" fill="none" stroke="#3c3f41" stroke-width="1.2"/>
<path d="M351.9 752.4 A9.15 2.6 0 0 1 370.2 752.4 V765.0999999999999 A9.15 2.6 0 0 1 351.9 765.0999999999999 Z" fill="#3a92ae"/>
<path d="M351.9 753.0 A9.15 2.6 0 0 0 370.2 753.0" fill="none" stroke="#3c3f41" stroke-width="1.2"/>
<path d="M351.9 757.1 A9.15 2.6 0 0 0 370.2 757.1" fill="none" stroke="#3c3f41" stroke-width="1.2"/>
<path d="M351.9 761.2 A9.15 2.6 0 0 0 370.2 761.2" fill="none" stroke="#3c3f41" stroke-width="1.2"/>
<rect x="353.6" y="676.5" width="14.9" height="2.2" fill="#87929a"/>
<rect x="353.6" y="690" width="14.9" height="2.2" fill="#87929a"/>
<rect x="351.9" y="679.8" width="18.2" height="9.1" fill="#d9a343"/>
<text x="353.2" y="687.5" font-family="Liberation Mono, monospace" font-weight="bold" font-size="8.6" letter-spacing="0.4" fill="#231f20" fill-opacity="0.8">DDL</text>
<path d="M354.6 705.4 C352.6 706 352 708 352 709.2 C352 710.4 352.6 712.4 354.6 713 Z" fill="#87929a"/>
<path d="M358 703 H362.6 C363.4 703 363.8 703.4 363.8 704.2 V713.8 C363.8 714.6 363.4 715 362.6 715 H358 C356.8 713 356.2 711 356.2 709 C356.2 707 356.8 705 358 703 Z" fill="#87929a"/>
<rect x="365.2" y="704.4" width="5" height="2.6" fill="#87929a"/>
<rect x="365.2" y="711" width="5" height="2.6" fill="#87929a"/>
<g fill="#afb1b3"><path d="M353.2 727.8 H359.3 L360.8 729.8 H368.8 V732.9 H356.6 L353.2 738.6 Z"/><path d="M357.3 734 H371.2 L368 740.3 H353.7 Z"/></g>
<rect x="354.9" y="779" width="12.2" height="4.2" fill="#87929a"/>
<rect x="352" y="782" width="4.4" height="12" fill="#87929a"/>
<rect x="365.8" y="782" width="4.3" height="12" fill="#40b6e0"/>
<rect x="354.9" y="792.6" width="12.2" height="4.3" fill="#40b6e0"/>
<rect x="356.3" y="783.2" width="9.6" height="9.6" fill="#3c3f41"/>
<circle cx="356.1" cy="783" r="0.85" fill="#2d2a2a"/>
<circle cx="361.1" cy="783" r="0.85" fill="#2d2a2a"/>
<circle cx="366.1" cy="783" r="0.85" fill="#2d2a2a"/>
<circle cx="356.1" cy="788" r="0.85" fill="#2d2a2a"/>
<circle cx="366.1" cy="788" r="0.85" fill="#2d2a2a"/>
<circle cx="356.1" cy="793" r="0.85" fill="#2d2a2a"/>
<circle cx="361.1" cy="793" r="0.85" fill="#2d2a2a"/>
<circle cx="366.1" cy="793" r="0.85" fill="#2d2a2a"/>
<rect x="354.9" y="803.8" width="12.2" height="2" fill="#87929a"/></svg>
<span class='t' style='left:377.5px;top:33.80px;font-size:15px;line-height:20px;letter-spacing:-0.188px;color:#bbbbbb;'>Project...</span><span class='t' style='left:377.5px;top:58.80px;font-size:15px;line-height:20px;letter-spacing:-0.127px;color:#bbbbbb;'>Project from Existing Sources...</span><span class='t' style='left:377.5px;top:83.80px;font-size:15px;line-height:20px;letter-spacing:0.044px;color:#bbbbbb;'>Project from Version Control...</span><span class='t' style='left:377.5px;top:112.80px;font-size:15px;line-height:20px;letter-spacing:0.225px;color:#bbbbbb;'>Module...</span><span class='t' style='left:377.5px;top:137.80px;font-size:15px;line-height:20px;letter-spacing:0.008px;color:#bbbbbb;'>Module from Existing Sources...</span><span class='t' style='left:377.5px;top:166.80px;font-size:15px;line-height:20px;letter-spacing:-0.818px;color:#bbbbbb;'>Java Class</span><span class='t' style='left:377.5px;top:191.80px;font-size:15px;line-height:20px;letter-spacing:-0.122px;color:#bbbbbb;'>Kotlin Class/File</span><span class='t' style='left:377.5px;top:216.80px;font-size:15px;line-height:20px;letter-spacing:-0.624px;color:#bbbbbb;'>File</span><span class='t' style='left:377.5px;top:241.80px;font-size:15px;line-height:20px;letter-spacing:-0.318px;color:#bbbbbb;'>Scratch File</span><span class='t' style='left:486.3px;top:241.80px;font-size:15px;line-height:20px;letter-spacing:0.267px;color:#bbbbbb;'>Ctrl+Alt+Shift+Insert</span><span class='t' style='left:377.5px;top:266.80px;font-size:15px;line-height:20px;letter-spacing:0.148px;color:#bbbbbb;'>Directory</span><span class='t' style='left:377.5px;top:295.80px;font-size:15px;line-height:20px;letter-spacing:-0.253px;color:#bbbbbb;'>HTML File</span><span class='t' style='left:377.5px;top:320.80px;font-size:15px;line-height:20px;letter-spacing:0.146px;color:#bbbbbb;'>Kotlin Script</span><span class='t' style='left:377.5px;top:345.80px;font-size:15px;line-height:20px;letter-spacing:0.179px;color:#bbbbbb;'>Kotlin Worksheet</span><span class='t' style='left:377.5px;top:370.80px;font-size:15px;line-height:20px;letter-spacing:-0.261px;color:#bbbbbb;'>Stylesheet</span><span class='t' style='left:377.5px;top:395.80px;font-size:15px;line-height:20px;letter-spacing:-0.348px;color:#bbbbbb;'>JavaScript File</span><span class='t' style='left:377.5px;top:420.80px;font-size:15px;line-height:20px;letter-spacing:-0.193px;color:#bbbbbb;'>TypeScript File</span><span class='t' style='left:377.5px;top:445.80px;font-size:15px;line-height:20px;letter-spacing:-0.127px;color:#bbbbbb;'>package.json File</span><span class='t' style='left:377.5px;top:470.80px;font-size:15px;line-height:20px;letter-spacing:-0.005px;color:#bbbbbb;'>OpenAPI Specification</span><span class='t' style='left:377.5px;top:495.80px;font-size:15px;line-height:20px;letter-spacing:-0.051px;color:#777777;'>Swing UI Designer</span><span class='t' style='left:377.5px;top:520.80px;font-size:15px;line-height:20px;letter-spacing:-0.184px;color:#bbbbbb;'>Resource Bundle</span><span class='t' style='left:377.5px;top:545.80px;font-size:15px;line-height:20px;letter-spacing:0.038px;color:#bbbbbb;'>EditorConfig File</span><span class='t' style='left:377.5px;top:570.80px;font-size:15px;line-height:20px;letter-spacing:0.109px;color:#bbbbbb;'>XML Configuration File</span><span class='t' style='left:377.5px;top:595.80px;font-size:15px;line-height:20px;letter-spacing:-0.476px;color:#bbbbbb;'>HTTP Request</span><span class='t' style='left:377.5px;top:620.80px;font-size:15px;line-height:20px;letter-spacing:0.102px;color:#bbbbbb;'>Diagram</span><span class='t' style='left:377.5px;top:649.80px;font-size:15px;line-height:20px;letter-spacing:-0.179px;color:#bbbbbb;'>Data Source</span><span class='t' style='left:377.5px;top:674.80px;font-size:15px;line-height:20px;letter-spacing:-0.164px;color:#bbbbbb;'>DDL Data Source</span><span class='t' style='left:377.5px;top:699.80px;font-size:15px;line-height:20px;letter-spacing:-0.207px;color:#bbbbbb;'>Data Source from URL</span><span class='t' style='left:377.5px;top:724.80px;font-size:15px;line-height:20px;letter-spacing:-0.024px;color:#bbbbbb;'>Data Source from Path</span><span class='t' style='left:377.5px;top:749.80px;font-size:15px;line-height:20px;letter-spacing:-0.064px;color:#bbbbbb;'>Data Source in Path</span><span class='t' style='left:377.5px;top:778.80px;font-size:15px;line-height:20px;letter-spacing:-0.064px;color:#bbbbbb;'>Driver and Data Source</span>
</div>
</body></html>
